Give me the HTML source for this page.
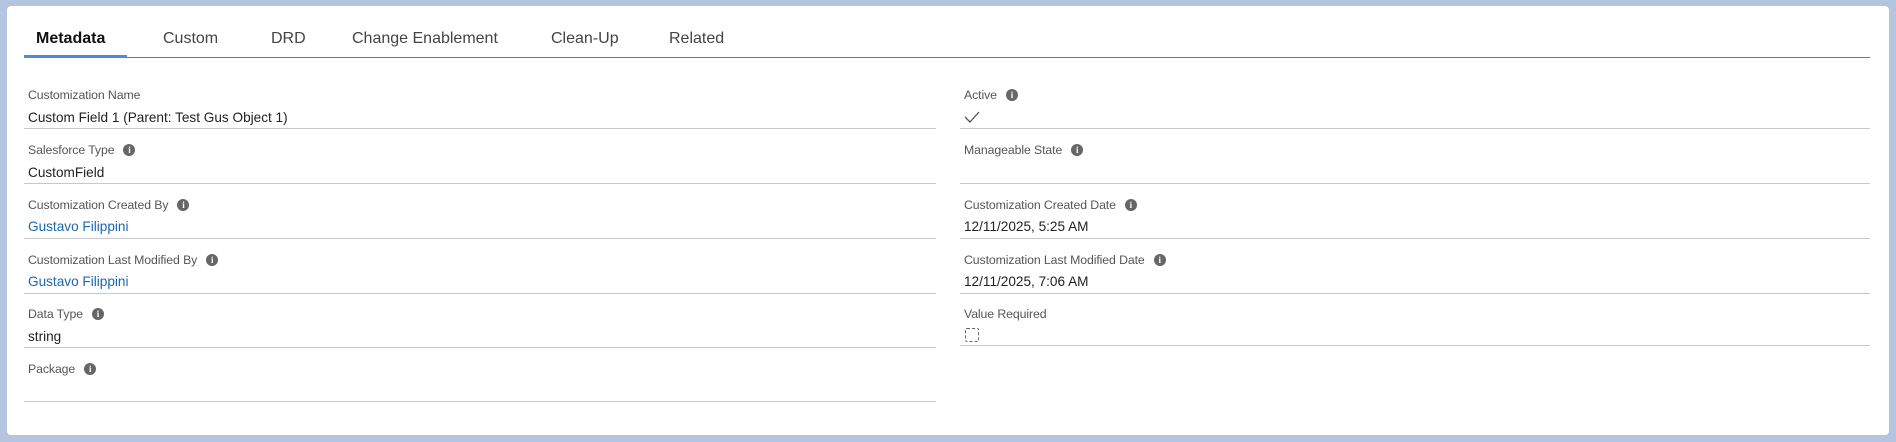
<!DOCTYPE html>
<html><head><style>
*{margin:0;padding:0;box-sizing:border-box}
body{width:1896px;height:442px;background:#b3c5df;font-family:"Liberation Sans",sans-serif;position:relative;overflow:hidden}
.card{position:absolute;left:7px;top:6px;width:1882px;height:429px;background:#fff;border-radius:4px}
.tab{position:absolute;top:30px;font-size:16px;color:#444;white-space:nowrap}
.tabline{position:absolute;left:24px;width:1846px;top:57px;height:1px;background:#777}
.ind{position:absolute;left:24px;width:103px;top:55px;height:3px;background:#4a8fd6}
.lbl{position:absolute;font-size:12.3px;color:#555;white-space:nowrap;letter-spacing:-0.1px}
.val{position:absolute;font-size:13.6px;color:#222;white-space:nowrap}
.link{color:#1d66b0}
.div{position:absolute;height:1px;background:#c8c8c8}
.i{display:inline-block;width:12px;height:12px;border-radius:50%;background:#666;color:#fff;font-size:9px;font-weight:bold;text-align:center;line-height:12px;margin-left:9px;vertical-align:1px;font-family:"Liberation Serif",serif}
</style></head><body>
<div class="card"></div>
<div class="tab" style="left:36px;font-weight:bold;color:#111">Metadata</div>
<div class="tab" style="left:163px">Custom</div>
<div class="tab" style="left:271px">DRD</div>
<div class="tab" style="left:352px">Change Enablement</div>
<div class="tab" style="left:551px">Clean-Up</div>
<div class="tab" style="left:669px">Related</div>
<div class="tabline"></div><div class="ind"></div>

<div class="lbl" style="left:28px;top:88px">Customization Name</div>
<div class="val" style="left:28px;top:110px">Custom Field 1 (Parent: Test Gus Object 1)</div>
<div class="div" style="left:24px;width:912px;top:128px"></div>
<div class="lbl" style="left:28px;top:143px">Salesforce Type<span class="i">i</span></div>
<div class="val" style="left:28px;top:165px">CustomField</div>
<div class="div" style="left:24px;width:912px;top:183px"></div>
<div class="lbl" style="left:28px;top:198px">Customization Created By<span class="i">i</span></div>
<div class="val link" style="left:28px;top:219px">Gustavo Filippini</div>
<div class="div" style="left:24px;width:912px;top:238px"></div>
<div class="lbl" style="left:28px;top:253px">Customization Last Modified By<span class="i">i</span></div>
<div class="val link" style="left:28px;top:274px">Gustavo Filippini</div>
<div class="div" style="left:24px;width:912px;top:293px"></div>
<div class="lbl" style="left:28px;top:307px">Data Type<span class="i">i</span></div>
<div class="val" style="left:28px;top:329px">string</div>
<div class="div" style="left:24px;width:912px;top:347px"></div>
<div class="lbl" style="left:28px;top:362px">Package<span class="i">i</span></div>
<div class="div" style="left:24px;width:912px;top:401px"></div>

<div class="lbl" style="left:964px;top:88px">Active<span class="i">i</span></div>
<svg style="position:absolute;left:964px;top:110px" width="16" height="14"><path d="M1 7 L6 12 L15 2" fill="none" stroke="#555" stroke-width="1.3"/></svg>
<div class="div" style="left:960px;width:910px;top:128px"></div>
<div class="lbl" style="left:964px;top:143px">Manageable State<span class="i">i</span></div>
<div class="div" style="left:960px;width:910px;top:183px"></div>
<div class="lbl" style="left:964px;top:198px">Customization Created Date<span class="i">i</span></div>
<div class="val" style="left:964px;top:219px">12/11/2025, 5:25 AM</div>
<div class="div" style="left:960px;width:910px;top:238px"></div>
<div class="lbl" style="left:964px;top:253px">Customization Last Modified Date<span class="i">i</span></div>
<div class="val" style="left:964px;top:274px">12/11/2025, 7:06 AM</div>
<div class="div" style="left:960px;width:910px;top:293px"></div>
<div class="lbl" style="left:964px;top:307px">Value Required</div>
<div style="position:absolute;left:965px;top:328px;width:14px;height:14px;border:1px dashed #666;border-radius:2px"></div>
<div class="div" style="left:960px;width:910px;top:345px"></div>
</body></html>
